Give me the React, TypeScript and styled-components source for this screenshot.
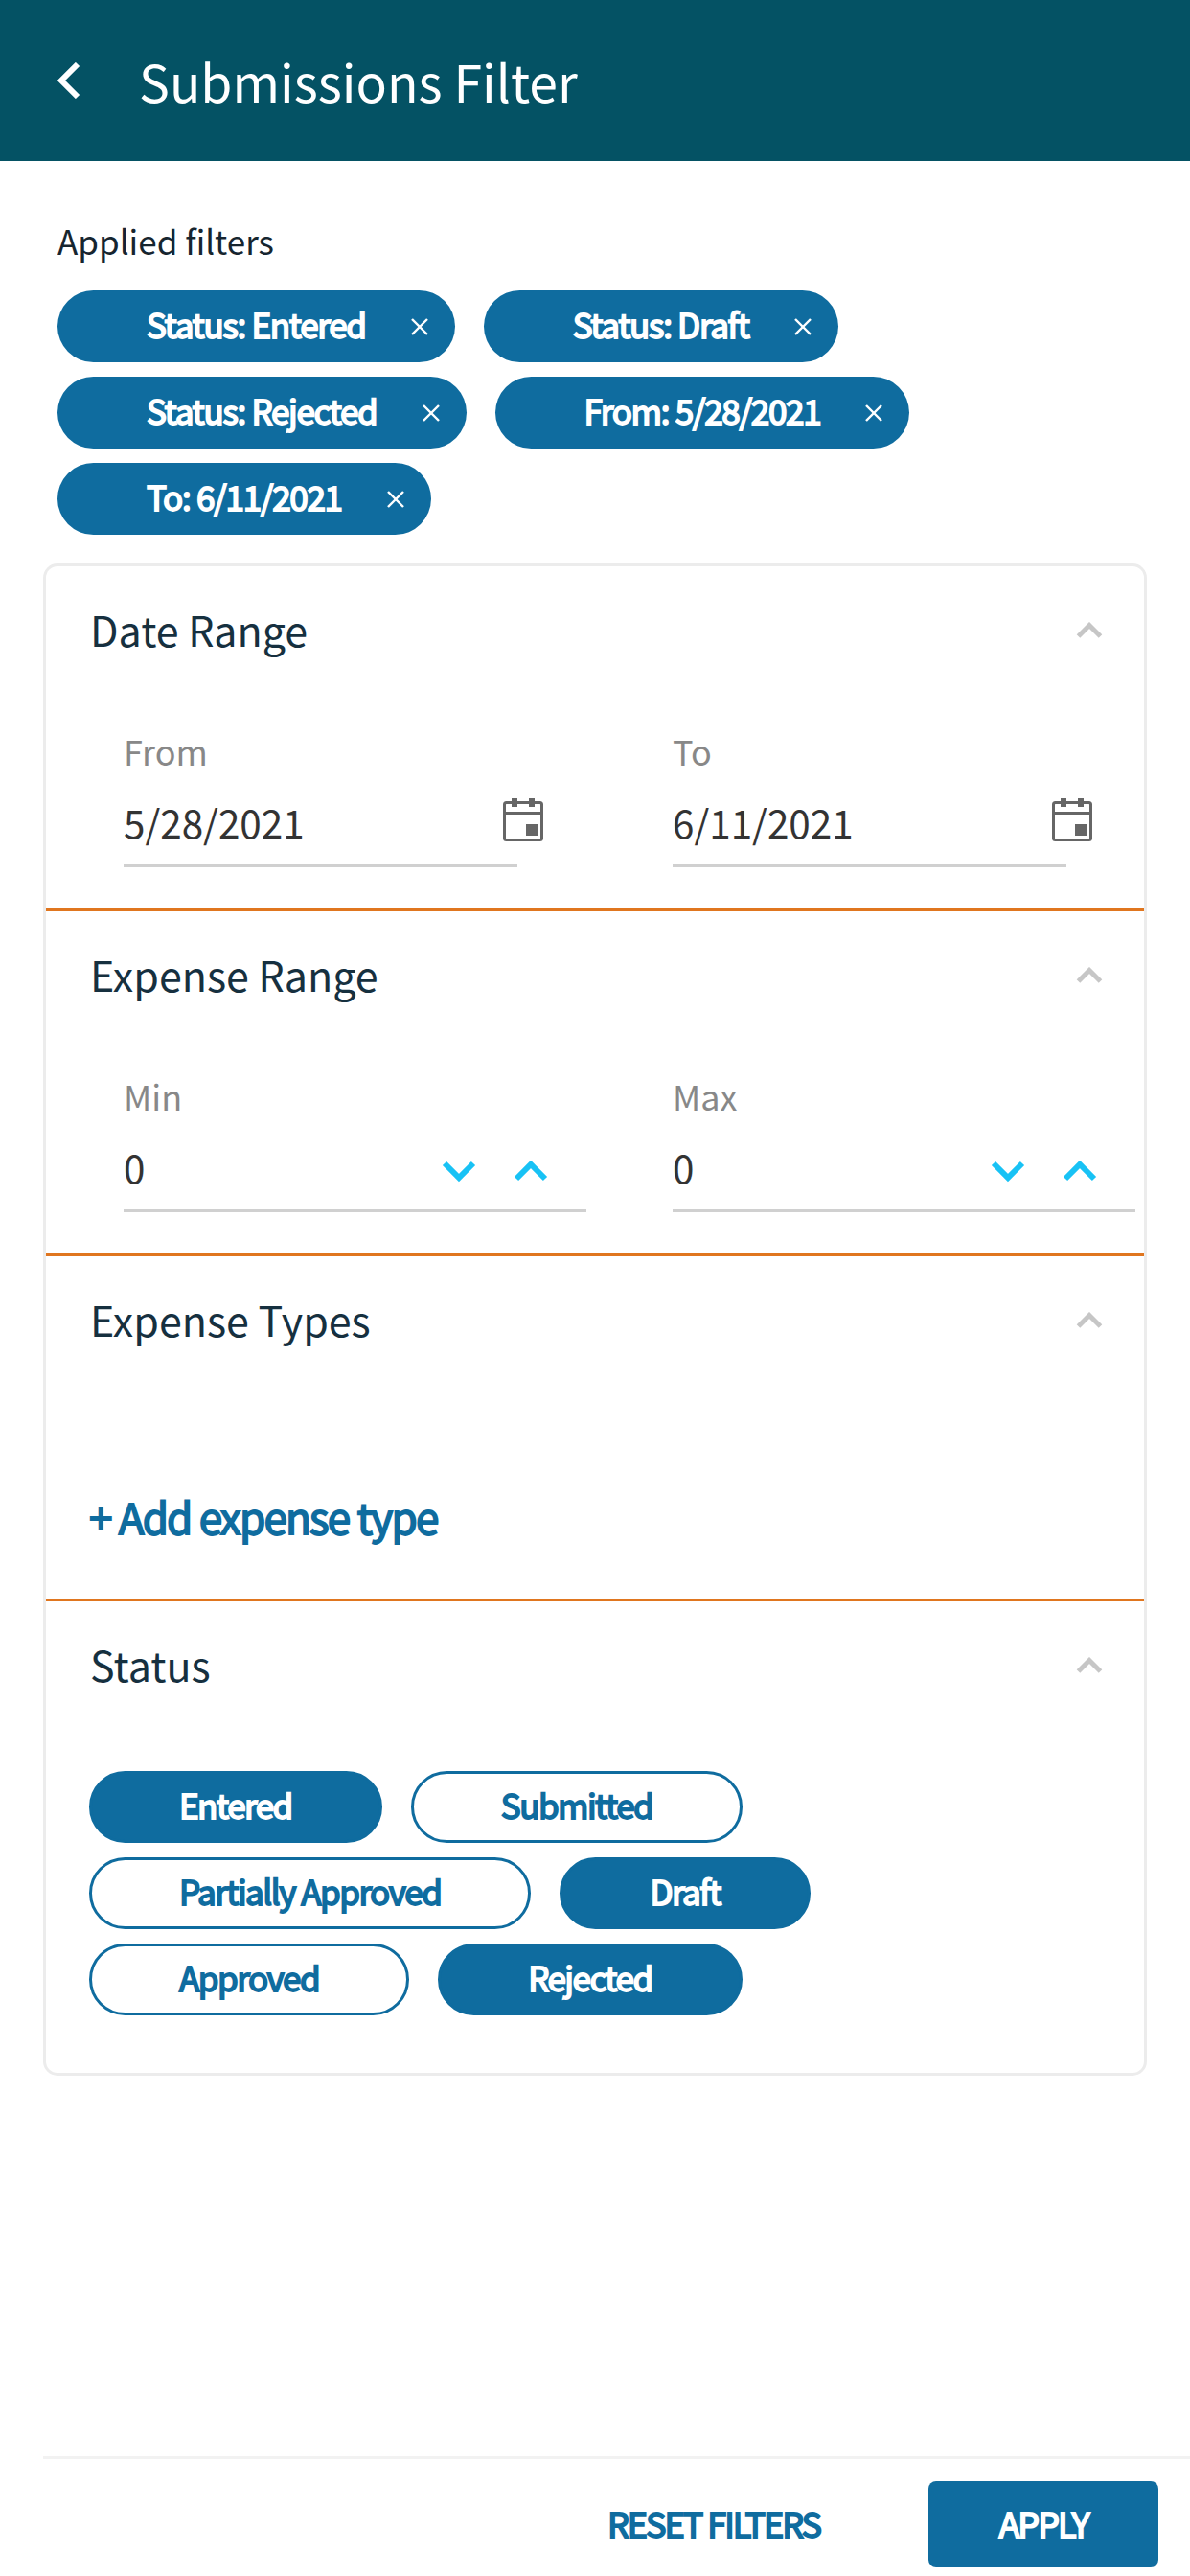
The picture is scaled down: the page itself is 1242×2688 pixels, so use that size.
import * as React from 'react';
import styled, { createGlobalStyle, css } from 'styled-components';

const GlobalStyle = createGlobalStyle`
  html, body {
    margin: 0;
    padding: 0;
    background: #fff;
    font-family: "Noto Sans CJK SC", "Noto Sans", sans-serif;
  }
  * { box-sizing: border-box; }
`;

// heavy labels in the screenshot look like a fake bold, so stroke the regular
const heavy = css`
  font-weight: 400;
  -webkit-text-stroke: 1.8px currentColor;
`;

const Page = styled.div`
  width: 1242px;
  height: 2688px;
  display: flex;
  flex-direction: column;
  overflow: hidden;
`;

const Header = styled.header`
  height: 168px;
  flex: none;
  background: #045264;
  display: flex;
  align-items: center;
  padding-left: 60px;
  gap: 61px;
  color: #fff;
`;

const Title = styled.h1`
  margin: 0;
  font-size: 53.5px;
  font-weight: 400;
  line-height: 1;
  color: #fff;
`;

const Applied = styled.section`
  padding: 59px 0 0 60px;
`;

const AppliedLabel = styled.div`
  font-size: 35px;
  line-height: 48px;
  color: #16252f;
  margin-bottom: 28px;
`;

const ChipList = styled.div`
  display: flex;
  flex-direction: column;
  gap: 15px;
  align-items: flex-start;
`;

const StatusList = styled(ChipList)`
  margin: 47px 0 0 -1px;
`;

const ChipRow = styled.div`
  display: flex;
  gap: 30px;
`;

const Chip = styled.div`
  height: 75px;
  border-radius: 38px;
  background: #0f6c9f;
  color: #fff;
  display: flex;
  align-items: center;
  padding: 0 28px 6px 93px;
  gap: 47px;
  font-size: 35px;
  letter-spacing: -1.3px;
  ${heavy}
  & > svg {
    margin-top: 6px;
  }
`;

const Card = styled.div`
  width: 1146px;
  margin: 33px 0 0 48px;
  border-radius: 12px;
  background: #fff;
  box-shadow: 0 0 0 3px #ececec;
`;

const Section = styled.section<{ $last?: boolean }>`
  height: ${p => (p.$last ? '492px' : '360px')};
  border-bottom: ${p => (p.$last ? 'none' : '3px solid #e0761f')};
  padding: 0 0 0 46px;
`;

const SectionHead = styled.div`
  height: 130px;
  display: flex;
  align-items: center;
  justify-content: space-between;
  padding-right: 43px;
  & > svg {
    margin-top: 4px;
  }
`;

const SectionTitle = styled.h2`
  margin: 0;
  font-size: 43px;
  font-weight: 400;
  color: #16303f;
`;

const Fields = styled.div`
  display: grid;
  grid-template-columns: 573px 1fr;
  padding: 38px 0 0 35px;
`;

const Field = styled.div``;

const FieldLabel = styled.div`
  font-size: 36px;
  line-height: 48px;
  color: #888;
  margin-bottom: 6px;
`;

const InputRow = styled.div<{ $width: number; $pad: number }>`
  position: relative;
  width: ${p => p.$width}px;
  height: 92px;
  border-bottom: 3px solid #d0d0d0;
  display: flex;
  align-items: center;
  justify-content: space-between;
  padding-right: ${p => p.$pad}px;
  font-size: 40.4px;
  color: #333;
`;

const CalendarButton = styled.span`
  position: absolute;
  right: -27px;
  top: 20px;
  line-height: 0;
`;

const Spinners = styled.div`
  display: flex;
  gap: 39px;
  padding-top: 9px;
`;

const AddLink = styled.a`
  display: block;
  margin: 113px 0 0 -1px;
  font-size: 44px;
  letter-spacing: -1.8px;
  line-height: 56px;
  color: #0f6c9f;
  ${heavy}
`;

const StatusPill = styled.div<{ $on?: boolean }>`
  height: 75px;
  border-radius: 38px;
  padding: 0 91px 6px;
  display: flex;
  align-items: center;
  border: 3px solid #0f6c9f;
  background: ${p => (p.$on ? '#0f6c9f' : '#fff')};
  color: ${p => (p.$on ? '#fff' : '#0f6c9f')};
  font-size: 35px;
  letter-spacing: -1.5px;
  ${heavy}
`;

const Footer = styled.footer`
  margin: auto 0 9px 45px;
  border-top: 3px solid #f2f2f2;
  padding: 23px 33px 0 0;
  display: flex;
  justify-content: flex-end;
  align-items: center;
  gap: 113px;
`;

const ResetButton = styled.button`
  border: none;
  background: none;
  padding: 0 0 4px;
  font-family: inherit;
  font-size: 36px;
  letter-spacing: -2px;
  color: #0f6c9f;
  ${heavy}
`;

const ApplyButton = styled.button`
  width: 240px;
  height: 90px;
  border: none;
  border-radius: 8px;
  padding: 0 0 4px;
  background: #0f6c9f;
  color: #fff;
  font-family: inherit;
  font-size: 36px;
  letter-spacing: -2px;
  ${heavy}
`;

const BackIcon = () => (
  <svg width="24" height="38" viewBox="0 0 24 38" fill="none" stroke="#fff" strokeWidth="6">
    <polyline points="21,2 4,19 21,36" />
  </svg>
);

const CloseIcon = () => (
  <svg width="18" height="18" viewBox="0 0 18 18" stroke="#fff" strokeWidth="2.4">
    <line x1="1" y1="1" x2="17" y2="17" />
    <line x1="17" y1="1" x2="1" y2="17" />
  </svg>
);

const SectionChevron = () => (
  <svg width="28" height="18" viewBox="0 0 28 18" fill="none" stroke="#c6c6c6" strokeWidth="5">
    <polyline points="2.5,15 14,3.5 25.5,15" />
  </svg>
);

const SpinChevron = ({ up }: { up?: boolean }) => (
  <svg width="36" height="24" viewBox="0 0 36 24" fill="none" stroke="#18c2f5" strokeWidth="6">
    <polyline points={up ? '3,20 18,5 33,20' : '3,4 18,19 33,4'} />
  </svg>
);

const CalendarIcon = () => (
  <svg width="42" height="45" viewBox="0 0 42 45" fill="none">
    <rect x="1.5" y="4.5" width="39" height="39" rx="2" stroke="#666" strokeWidth="3" />
    <rect x="1.5" y="14" width="39" height="3" fill="#666" />
    <rect x="9" y="0" width="6" height="9" fill="#666" />
    <rect x="27" y="0" width="6" height="9" fill="#666" />
    <rect x="24" y="27" width="12" height="12" fill="#666" />
  </svg>
);

const FilterSection = ({ title, children, last }: { title: string; children?: React.ReactNode; last?: boolean }) => (
  <Section $last={last}>
    <SectionHead>
      <SectionTitle>{title}</SectionTitle>
      <SectionChevron />
    </SectionHead>
    {children}
  </Section>
);

const DateField = ({ label, value }: { label: string; value: string }) => (
  <Field>
    <FieldLabel>{label}</FieldLabel>
    <InputRow $width={411} $pad={0}>
      {value}
      <CalendarButton><CalendarIcon /></CalendarButton>
    </InputRow>
  </Field>
);

const NumberField = ({ label, width }: { label: string; width: number }) => (
  <Field>
    <FieldLabel>{label}</FieldLabel>
    <InputRow $width={width} $pad={40}>
      0
      <Spinners>
        <SpinChevron />
        <SpinChevron up />
      </Spinners>
    </InputRow>
  </Field>
);

const appliedRows = [
  ['Status: Entered', 'Status: Draft'],
  ['Status: Rejected', 'From: 5/28/2021'],
  ['To: 6/11/2021'],
];

const statusRows: { name: string; on?: boolean }[][] = [
  [{ name: 'Entered', on: true }, { name: 'Submitted' }],
  [{ name: 'Partially Approved' }, { name: 'Draft', on: true }],
  [{ name: 'Approved' }, { name: 'Rejected', on: true }],
];

const App = () => (
  <Page>
    <GlobalStyle />
    <Header>
      <BackIcon />
      <Title>Submissions Filter</Title>
    </Header>
    <Applied>
      <AppliedLabel>Applied filters</AppliedLabel>
      <ChipList>
        {appliedRows.map((row, i) => (
          <ChipRow key={i}>
            {row.map(c => (
              <Chip key={c}>
                {c}
                <CloseIcon />
              </Chip>
            ))}
          </ChipRow>
        ))}
      </ChipList>
    </Applied>
    <Card>
      <FilterSection title="Date Range">
        <Fields>
          <DateField label="From" value="5/28/2021" />
          <DateField label="To" value="6/11/2021" />
        </Fields>
      </FilterSection>
      <FilterSection title="Expense Range">
        <Fields>
          <NumberField label="Min" width={483} />
          <NumberField label="Max" width={483} />
        </Fields>
      </FilterSection>
      <FilterSection title="Expense Types">
        <AddLink>+ Add expense type</AddLink>
      </FilterSection>
      <FilterSection title="Status" last>
        <StatusList>
          {statusRows.map((row, i) => (
            <ChipRow key={i}>
              {row.map(s => (
                <StatusPill key={s.name} $on={s.on}>{s.name}</StatusPill>
              ))}
            </ChipRow>
          ))}
        </StatusList>
      </FilterSection>
    </Card>
    <Footer>
      <ResetButton>RESET FILTERS</ResetButton>
      <ApplyButton>APPLY</ApplyButton>
    </Footer>
  </Page>
);

export default App;
